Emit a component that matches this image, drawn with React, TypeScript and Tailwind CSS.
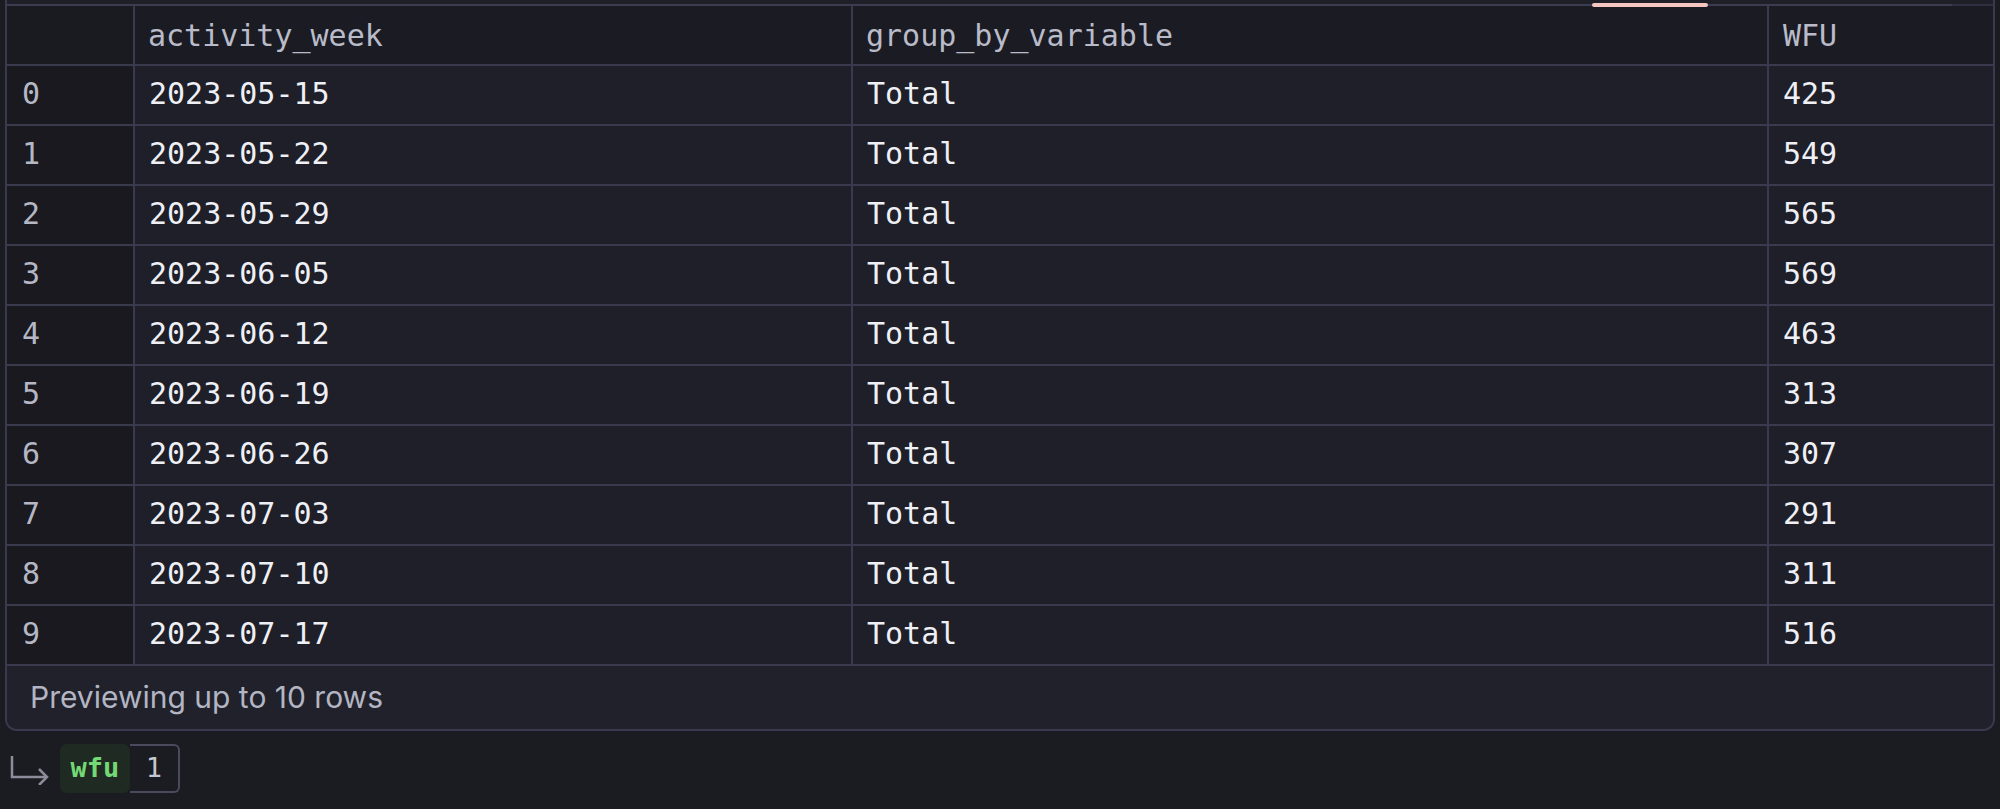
import React from "react";

const rows: [string, string, string, string][] = [
  ["0", "2023-05-15", "Total", "425"],
  ["1", "2023-05-22", "Total", "549"],
  ["2", "2023-05-29", "Total", "565"],
  ["3", "2023-06-05", "Total", "569"],
  ["4", "2023-06-12", "Total", "463"],
  ["5", "2023-06-19", "Total", "313"],
  ["6", "2023-06-26", "Total", "307"],
  ["7", "2023-07-03", "Total", "291"],
  ["8", "2023-07-10", "Total", "311"],
  ["9", "2023-07-17", "Total", "516"],
];

const mono = { fontFamily: '"DejaVu Sans Mono", "Liberation Mono", monospace' };

export default function App() {
  return (
    <div className="w-[2000px] h-[809px] bg-[#1b1b22] overflow-hidden">
      <div className="ml-[5px] mr-[5px] border-x-2 border-b-2 border-[#393a4d] rounded-b-[12px] bg-[#1f1f29] overflow-hidden">
        <div className="h-[4px] bg-[#1f1f28]" />
        <div className="relative h-[2px] bg-[#2f2f40]">
          <div className="absolute left-0 top-0 h-[2px] w-[1945px] bg-[#3c3c50]" />
          <div className="absolute left-[1585px] top-[-1px] h-[4px] w-[116px] rounded-full bg-[#f5c6bf]" />
        </div>
        <div
          className="grid grid-cols-[128px_718px_916px_1fr] text-[30px]"
          style={mono}
        >
          <div className="h-[60px] border-r-2 border-b-2 border-[#393a4d] bg-[#1a1a21]" />
          <div className="h-[60px] border-r-2 border-b-2 border-[#393a4d] bg-[#1b1b23] flex items-center pl-[13px] text-[#b9bbc9]">
            activity_week
          </div>
          <div className="h-[60px] border-r-2 border-b-2 border-[#393a4d] bg-[#1b1b23] flex items-center pl-[13px] text-[#b9bbc9]">
            group_by_variable
          </div>
          <div className="h-[60px] border-b-2 border-[#393a4d] bg-[#1b1b23] flex items-center pl-[14px] text-[#b9bbc9]">
            WFU
          </div>
          {rows.map((r) => (
            <React.Fragment key={r[0]}>
              <div className="h-[60px] border-r-2 border-b-2 border-[#393a4d] bg-[#19191f] flex items-center pl-[15px] pb-[3px] text-[#b5b7c5]">
                {r[0]}
              </div>
              <div className="h-[60px] border-r-2 border-b-2 border-[#393a4d] bg-[#1e1f28] flex items-center pl-[14px] pb-[3px] text-[#eef0f5]">
                {r[1]}
              </div>
              <div className="h-[60px] border-r-2 border-b-2 border-[#393a4d] bg-[#1e1f28] flex items-center pl-[14px] pb-[3px] text-[#eef0f5]">
                {r[2]}
              </div>
              <div className="h-[60px] border-b-2 border-[#393a4d] bg-[#1e1f28] flex items-center pl-[14px] pb-[3px] text-[#eef0f5]">
                {r[3]}
              </div>
            </React.Fragment>
          ))}
        </div>
        <div
          className="h-[63px] flex items-center pl-[23px] text-[30px] text-[#b3b5c3] bg-[#20212b]"
          style={{ fontFamily: 'Inter, "Noto Sans", sans-serif' }}
        >
          Previewing up to 10 rows
        </div>
      </div>
      <div className="flex items-center mt-[13px] pl-[10px]">
        <svg width="40" height="30" viewBox="0 0 40 30" className="mr-[10px] mt-[2px]">
          <path d="M2 1 V22 H37" fill="none" stroke="#8b8d9b" strokeWidth="2.5" />
          <path d="M29 14 L37 22 L29 30" fill="none" stroke="#8b8d9b" strokeWidth="2.5" />
        </svg>
        <div
          className="h-[49px] w-[70px] flex items-center justify-center rounded-[7px] bg-[#1f2a23] text-[#74d874] font-bold text-[27px]"
          style={mono}
        >
          wfu
        </div>
        <div
          className="h-[49px] w-[50px] flex items-center justify-center border-y-2 border-r-2 border-[#4a4a5e] rounded-r-[6px] text-[#c4c6d0] text-[27px]"
          style={mono}
        >
          1
        </div>
      </div>
    </div>
  );
}
